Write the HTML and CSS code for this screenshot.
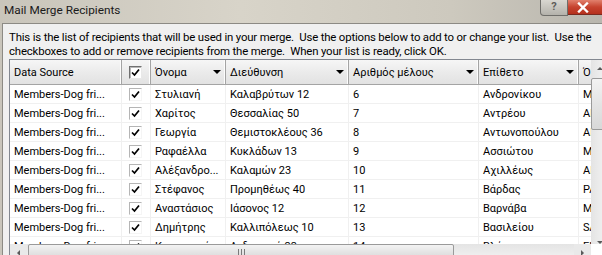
FILE: index.html
```html
<!DOCTYPE html>
<html lang="el">
<head>
  <meta charset="UTF-8">
  <title>Mail Merge Recipients</title>
  <link rel="stylesheet" href="styles.css">
</head>
<body>
  <div class="dialog">
    <div class="titlebar">
      <span class="title">Mail Merge Recipients</span>
      <div class="caption-buttons">
        <span class="btn-help">?</span>
        <span class="btn-close">
          <svg width="14" height="11" viewBox="0 0 14 11"><path d="M3 1.5 L11 9.5 M11 1.5 L3 9.5" stroke="#fff" stroke-width="2.4" stroke-linecap="square"/></svg>
        </span>
      </div>
    </div>

    <div class="client">
      <p class="intro">This is the list of recipients that will be used in your merge.&nbsp; Use the options below to add to or change your list.&nbsp; Use the<br>checkboxes to add or remove recipients from the merge.&nbsp; When your list is ready, click OK.</p>

      <div class="grid">
        <div class="grid-main">
          <div class="grid-body">
            <table class="recipients">
              <colgroup>
                <col style="width:112px">
                <col style="width:29px">
                <col style="width:75px">
                <col style="width:123px">
                <col style="width:130px">
                <col style="width:100px">
                <col style="width:60px">
              </colgroup>
              <thead>
                <tr>
                  <th>Data Source</th>
                  <th class="chk"><span class="box sunken"><svg width="11" height="11" viewBox="0 0 11 11"><path d="M2 5.5 L4.5 8 L9 2.5" fill="none" stroke="#000" stroke-width="1.7"/></svg></span></th>
                  <th><div class="hcell">Όνομα<span class="arrow"></span></div></th>
                  <th><div class="hcell">Διεύθυνση<span class="arrow"></span></div></th>
                  <th><div class="hcell">Αριθμός μέλους<span class="arrow"></span></div></th>
                  <th><div class="hcell">Επίθετο<span class="arrow"></span></div></th>
                  <th>Ό</th>
                </tr>
              </thead>
              <tbody>
                <tr><td>Members-Dog fri...</td><td class="chk"><span class="box"><svg width="11" height="11" viewBox="0 0 11 11"><path d="M2 5.5 L4.5 8 L9 2.5" fill="none" stroke="#000" stroke-width="1.7"/></svg></span></td><td>Στυλιανή</td><td>Καλαβρύτων 12</td><td>6</td><td>Ανδρονίκου</td><td>MARIA</td></tr>
                <tr><td>Members-Dog fri...</td><td class="chk"><span class="box"><svg width="11" height="11" viewBox="0 0 11 11"><path d="M2 5.5 L4.5 8 L9 2.5" fill="none" stroke="#000" stroke-width="1.7"/></svg></span></td><td>Χαρίτος</td><td>Θεσσαλίας 50</td><td>7</td><td>Αντρέου</td><td>ANNA</td></tr>
                <tr><td>Members-Dog fri...</td><td class="chk"><span class="box"><svg width="11" height="11" viewBox="0 0 11 11"><path d="M2 5.5 L4.5 8 L9 2.5" fill="none" stroke="#000" stroke-width="1.7"/></svg></span></td><td>Γεωργία</td><td>Θεμιστοκλέους 36</td><td>8</td><td>Αντωνοπούλου</td><td>ANGELIKI</td></tr>
                <tr><td>Members-Dog fri...</td><td class="chk"><span class="box"><svg width="11" height="11" viewBox="0 0 11 11"><path d="M2 5.5 L4.5 8 L9 2.5" fill="none" stroke="#000" stroke-width="1.7"/></svg></span></td><td>Ραφαέλλα</td><td>Κυκλάδων 13</td><td>9</td><td>Ασσιώτου</td><td>MARIA</td></tr>
                <tr><td>Members-Dog fri...</td><td class="chk"><span class="box"><svg width="11" height="11" viewBox="0 0 11 11"><path d="M2 5.5 L4.5 8 L9 2.5" fill="none" stroke="#000" stroke-width="1.7"/></svg></span></td><td>Αλέξανδρο...</td><td>Καλαμών 23</td><td>10</td><td>Αχιλλέως</td><td>ANTONIA</td></tr>
                <tr><td>Members-Dog fri...</td><td class="chk"><span class="box"><svg width="11" height="11" viewBox="0 0 11 11"><path d="M2 5.5 L4.5 8 L9 2.5" fill="none" stroke="#000" stroke-width="1.7"/></svg></span></td><td>Στέφανος</td><td>Προμηθέως 40</td><td>11</td><td>Βάρδας</td><td>PANAGIOTA</td></tr>
                <tr><td>Members-Dog fri...</td><td class="chk"><span class="box"><svg width="11" height="11" viewBox="0 0 11 11"><path d="M2 5.5 L4.5 8 L9 2.5" fill="none" stroke="#000" stroke-width="1.7"/></svg></span></td><td>Αναστάσιος</td><td>Ιάσονος 12</td><td>12</td><td>Βαρνάβα</td><td>MARIA</td></tr>
                <tr><td>Members-Dog fri...</td><td class="chk"><span class="box"><svg width="11" height="11" viewBox="0 0 11 11"><path d="M2 5.5 L4.5 8 L9 2.5" fill="none" stroke="#000" stroke-width="1.7"/></svg></span></td><td>Δημήτρης</td><td>Καλλιπόλεως 10</td><td>13</td><td>Βασιλείου</td><td>SAVVAS</td></tr>
                <tr><td>Members-Dog fri...</td><td class="chk"><span class="box"><svg width="11" height="11" viewBox="0 0 11 11"><path d="M2 5.5 L4.5 8 L9 2.5" fill="none" stroke="#000" stroke-width="1.7"/></svg></span></td><td>Κωνσταντίνα</td><td>Ανδριανού 33</td><td>14</td><td>Βλάχου</td><td>ELENI</td></tr>
              </tbody>
            </table>
          </div>
          <div class="hscroll">
            <span class="sb-btn"><span class="tri-left"></span></span>
            <div class="sb-track">
              <div class="sb-thumb"><span class="grip"></span></div>
            </div>
            <span class="sb-btn"><span class="tri-right"></span></span>
          </div>
        </div>
        <div class="vscroll">
          <span class="sb-btn"><span class="tri-up"></span></span>
          <div class="sb-track v">
            <div class="sb-thumb v"></div>
          </div>
          <span class="sb-btn down"><span class="tri-down"></span></span>
        </div>
      </div>
    </div>
  </div>
</body>
</html>
```

FILE: styles.css
```css
body {
  margin: 0;
  background: #f0f0f0;
  font-family: Roboto, "Noto Sans", sans-serif;
  font-size: 11px;
  color: #000;
}
.dialog {
  width: 602px;
  height: 255px;
  overflow: hidden;
  display: flex;
  flex-direction: column;
  background: linear-gradient(to right, #c9c5bb, #d8d4c9 40%, #cdc9be 75%, #b9b6ae);
}
.titlebar {
  height: 23px;
  flex: none;
  display: flex;
  justify-content: space-between;
  align-items: flex-start;
}
.title {
  padding: 1px 0 0 4px;
  font-size: 11.8px;
  line-height: 18px;
  color: #1a1a1a;
}
.caption-buttons {
  display: flex;
}
.btn-help {
  width: 26px;
  height: 15px;
  border: 1px solid #6f6e6a;
  border-top: none;
  border-radius: 0 0 0 4px;
  background: linear-gradient(to bottom, #d9d7d1, #b4b2ab);
  color: #5e5d59;
  font-size: 11px;
  line-height: 14px;
  text-align: center;
  font-weight: bold;
}
.btn-close {
  width: 34px;
  height: 15px;
  border-bottom: 1px solid #7a2a20;
  background: linear-gradient(to bottom, #e1806d, #c6432f 50%, #b5301d);
  display: flex;
  align-items: center;
  padding-left: 8px;
  box-sizing: border-box;
}
.client {
  flex: 1;
  margin-left: 2px;
  border-left: 1px solid #8c8a84;
  border-top: 1px solid #8c8a84;
  background: #f0f0f0;
  padding-left: 6px;
  overflow: hidden;
}
.intro {
  margin: 6px 0 0;
  font-size: 11.4px;
  line-height: 14px;
  white-space: nowrap;
  letter-spacing: -0.17px;
}
.grid {
  margin-top: 1px;
  width: 600px;
  border: 1px solid #828790;
  background: #fff;
  display: flex;
}
.grid-main {
  width: 581px;
  flex: none;
}
.grid-body {
  height: 184px;
  overflow: hidden;
}
.recipients {
  table-layout: fixed;
  width: 629px;
  border-collapse: separate;
  border-spacing: 0;
}
.recipients th {
  height: 24px;
  padding: 0 0 0 4px;
  text-align: left;
  font-weight: normal;
  white-space: nowrap;
  overflow: hidden;
  background: linear-gradient(to bottom, #f6f6f6, #ebebeb 50%, #e2e2e2);
  border-right: 1px solid #a4a4a4;
  border-bottom: 1px solid #a4a4a4;
  box-shadow: inset -1px 0 0 #fdfdfd;
}
.hcell {
  display: flex;
  align-items: center;
  justify-content: space-between;
}
.arrow {
  width: 0;
  height: 0;
  border-left: 4px solid transparent;
  border-right: 4px solid transparent;
  border-top: 4px solid #000;
  margin-right: 4px;
}
.recipients td {
  height: 19px;
  padding: 1px 0 0 4px;
  box-sizing: border-box;
  white-space: nowrap;
  overflow: hidden;
  border-right: 1px solid #f0f0f0;
  border-bottom: 1px solid #f0f0f0;
}
.recipients .chk {
  padding: 0;
  text-align: center;
}
.box {
  display: inline-flex;
  align-items: center;
  justify-content: center;
  width: 11px;
  height: 11px;
  border: 1px solid #b5b5b5;
  border-right-color: #f5f5f5;
  border-bottom-color: #f5f5f5;
  background: #fff;
  vertical-align: middle;
  margin-left: -1px;
}
.box.sunken {
  border-color: #707070 #e8e8e8 #e8e8e8 #707070;
  box-shadow: inset 1px 1px 0 #b8b8b8;
}
.hscroll {
  height: 17px;
  display: flex;
  background: #e9e9e9;
}
.sb-btn {
  width: 17px;
  height: 17px;
  flex: none;
  display: flex;
  align-items: center;
  justify-content: center;
}
.sb-track {
  flex: 1;
  display: flex;
  align-items: stretch;
  background: linear-gradient(to bottom, #e4e4e4, #f4f4f4);
}
.sb-thumb {
  width: 424px;
  margin-left: 1px;
  border: 1px solid #9a9a9a;
  border-radius: 2px;
  background: linear-gradient(to bottom, #f3f3f3, #e4e4e4 50%, #d8d8d8);
  display: flex;
  align-items: center;
  justify-content: center;
}
.grip {
  width: 7px;
  height: 7px;
  background: repeating-linear-gradient(to right, #7a7a7a 0 1px, transparent 1px 3px);
}
.tri-left, .tri-right, .tri-up, .tri-down {
  width: 0;
  height: 0;
}
.tri-left {
  border-top: 3px solid transparent;
  border-bottom: 3px solid transparent;
  border-right: 3px solid #5a5a5a;
}
.tri-right {
  border-top: 3px solid transparent;
  border-bottom: 3px solid transparent;
  border-left: 3px solid #5a5a5a;
}
.tri-up {
  border-left: 3px solid transparent;
  border-right: 3px solid transparent;
  border-bottom: 3px solid #5a5a5a;
}
.tri-down {
  border-left: 3px solid transparent;
  border-right: 3px solid transparent;
  border-top: 3px solid #5a5a5a;
}
.vscroll {
  width: 17px;
  height: 184px;
  flex: none;
  display: flex;
  flex-direction: column;
  background: linear-gradient(to right, #e4e4e4, #f4f4f4);
}
.sb-track.v {
  flex-direction: column;
  background: none;
}
.sb-thumb.v {
  width: auto;
  height: 50px;
  margin: 1px 0 0;
}
.sb-btn.down {
  align-items: flex-end;
}
```
